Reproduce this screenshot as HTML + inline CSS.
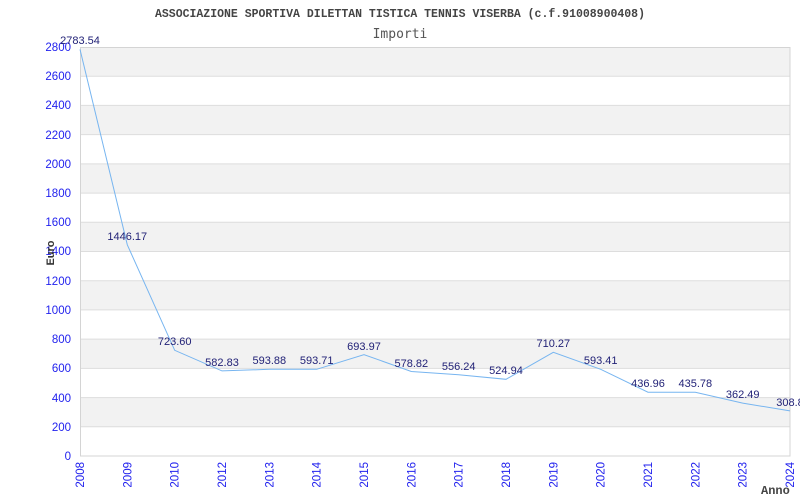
<!DOCTYPE html>
<html><head><meta charset="utf-8"><style>
html,body{margin:0;padding:0;background:#fff;width:800px;height:500px;overflow:hidden}
svg{display:block}
</style></head><body>
<svg width="800" height="500" xmlns="http://www.w3.org/2000/svg">
<rect width="800" height="500" fill="#fff"/>
<text x="400" y="17" text-anchor="middle" font-family="Liberation Mono, monospace" font-weight="bold" font-size="11.5" fill="#444">ASSOCIAZIONE SPORTIVA DILETTAN TISTICA TENNIS VISERBA (c.f.91008900408)</text>
<text x="400" y="38" text-anchor="middle" font-family="DejaVu Sans Mono, monospace" font-size="13" fill="#555">Importi</text>
<g fill="#f2f2f2">
<rect x="80" y="47" width="710" height="29.2"/>
<rect x="80" y="105.4" width="710" height="29.2"/>
<rect x="80" y="163.9" width="710" height="29.2"/>
<rect x="80" y="222.3" width="710" height="29.2"/>
<rect x="80" y="280.7" width="710" height="29.2"/>
<rect x="80" y="339.1" width="710" height="29.2"/>
<rect x="80" y="397.6" width="710" height="29.2"/>
</g>
<g stroke="#ddd" stroke-width="1">
<line x1="80" x2="790" y1="76.2" y2="76.2"/><line x1="80" x2="790" y1="105.4" y2="105.4"/>
<line x1="80" x2="790" y1="134.6" y2="134.6"/><line x1="80" x2="790" y1="163.9" y2="163.9"/>
<line x1="80" x2="790" y1="193.1" y2="193.1"/><line x1="80" x2="790" y1="222.3" y2="222.3"/>
<line x1="80" x2="790" y1="251.5" y2="251.5"/><line x1="80" x2="790" y1="280.7" y2="280.7"/>
<line x1="80" x2="790" y1="309.9" y2="309.9"/><line x1="80" x2="790" y1="339.1" y2="339.1"/>
<line x1="80" x2="790" y1="368.4" y2="368.4"/><line x1="80" x2="790" y1="397.6" y2="397.6"/>
<line x1="80" x2="790" y1="426.8" y2="426.8"/>
</g>
<rect x="80.5" y="47.5" width="709.5" height="408.5" fill="none" stroke="#d4d4d4"/>
<g font-family="Liberation Sans, sans-serif" font-size="11.5" fill="#2222ee" text-anchor="end">
<text x="71" y="51">2800</text><text x="71" y="80">2600</text><text x="71" y="109">2400</text>
<text x="71" y="139">2200</text><text x="71" y="168">2000</text><text x="71" y="197">1800</text>
<text x="71" y="226">1600</text><text x="71" y="255">1400</text><text x="71" y="285">1200</text>
<text x="71" y="314">1000</text><text x="71" y="343">800</text><text x="71" y="372">600</text>
<text x="71" y="402">400</text><text x="71" y="431">200</text><text x="71" y="460">0</text>
</g>
<g font-family="Liberation Sans, sans-serif" font-size="11.5" fill="#2222ee" text-anchor="end">
<text transform="translate(84,462) rotate(-90)">2008</text>
<text transform="translate(131.3,462) rotate(-90)">2009</text>
<text transform="translate(178.7,462) rotate(-90)">2010</text>
<text transform="translate(226,462) rotate(-90)">2012</text>
<text transform="translate(273.3,462) rotate(-90)">2013</text>
<text transform="translate(320.7,462) rotate(-90)">2014</text>
<text transform="translate(368,462) rotate(-90)">2015</text>
<text transform="translate(415.3,462) rotate(-90)">2016</text>
<text transform="translate(462.7,462) rotate(-90)">2017</text>
<text transform="translate(510,462) rotate(-90)">2018</text>
<text transform="translate(557.3,462) rotate(-90)">2019</text>
<text transform="translate(604.7,462) rotate(-90)">2020</text>
<text transform="translate(652,462) rotate(-90)">2021</text>
<text transform="translate(699.3,462) rotate(-90)">2022</text>
<text transform="translate(746.7,462) rotate(-90)">2023</text>
<text transform="translate(794,462) rotate(-90)">2024</text>
</g>
<polyline fill="none" stroke="#77b5f0" stroke-width="1" points="80,49.4 127.3,244.8 174.7,350.3 222,370.9 269.3,369.3 316.7,369.3 364,354.6 411.3,371.5 458.7,374.8 506,379.3 553.3,352.3 600.7,369.3 648,392.2 695.3,392.3 742.7,403.1 790,410.9"/>
<g font-family="Liberation Sans, sans-serif" font-size="11" fill="#222277" text-anchor="middle">
<text x="80" y="44">2783.54</text><text x="127.3" y="240">1446.17</text><text x="174.7" y="345">723.60</text>
<text x="222" y="366">582.83</text><text x="269.3" y="364">593.88</text><text x="316.7" y="364">593.71</text>
<text x="364" y="350">693.97</text><text x="411.3" y="367">578.82</text><text x="458.7" y="370">556.24</text>
<text x="506" y="374">524.94</text><text x="553.3" y="347">710.27</text><text x="600.7" y="364">593.41</text>
<text x="648" y="387">436.96</text><text x="695.3" y="387">435.78</text><text x="742.7" y="398">362.49</text>
<text x="790" y="406">308.8</text>
</g>
<text transform="translate(54,253) rotate(-90)" text-anchor="middle" font-family="Liberation Sans, sans-serif" font-weight="bold" font-size="11" fill="#333">Euro</text>
<text x="761" y="494" font-family="Liberation Mono, monospace" font-weight="bold" font-size="12" fill="#444">Anno</text>
</svg>
</body></html>
